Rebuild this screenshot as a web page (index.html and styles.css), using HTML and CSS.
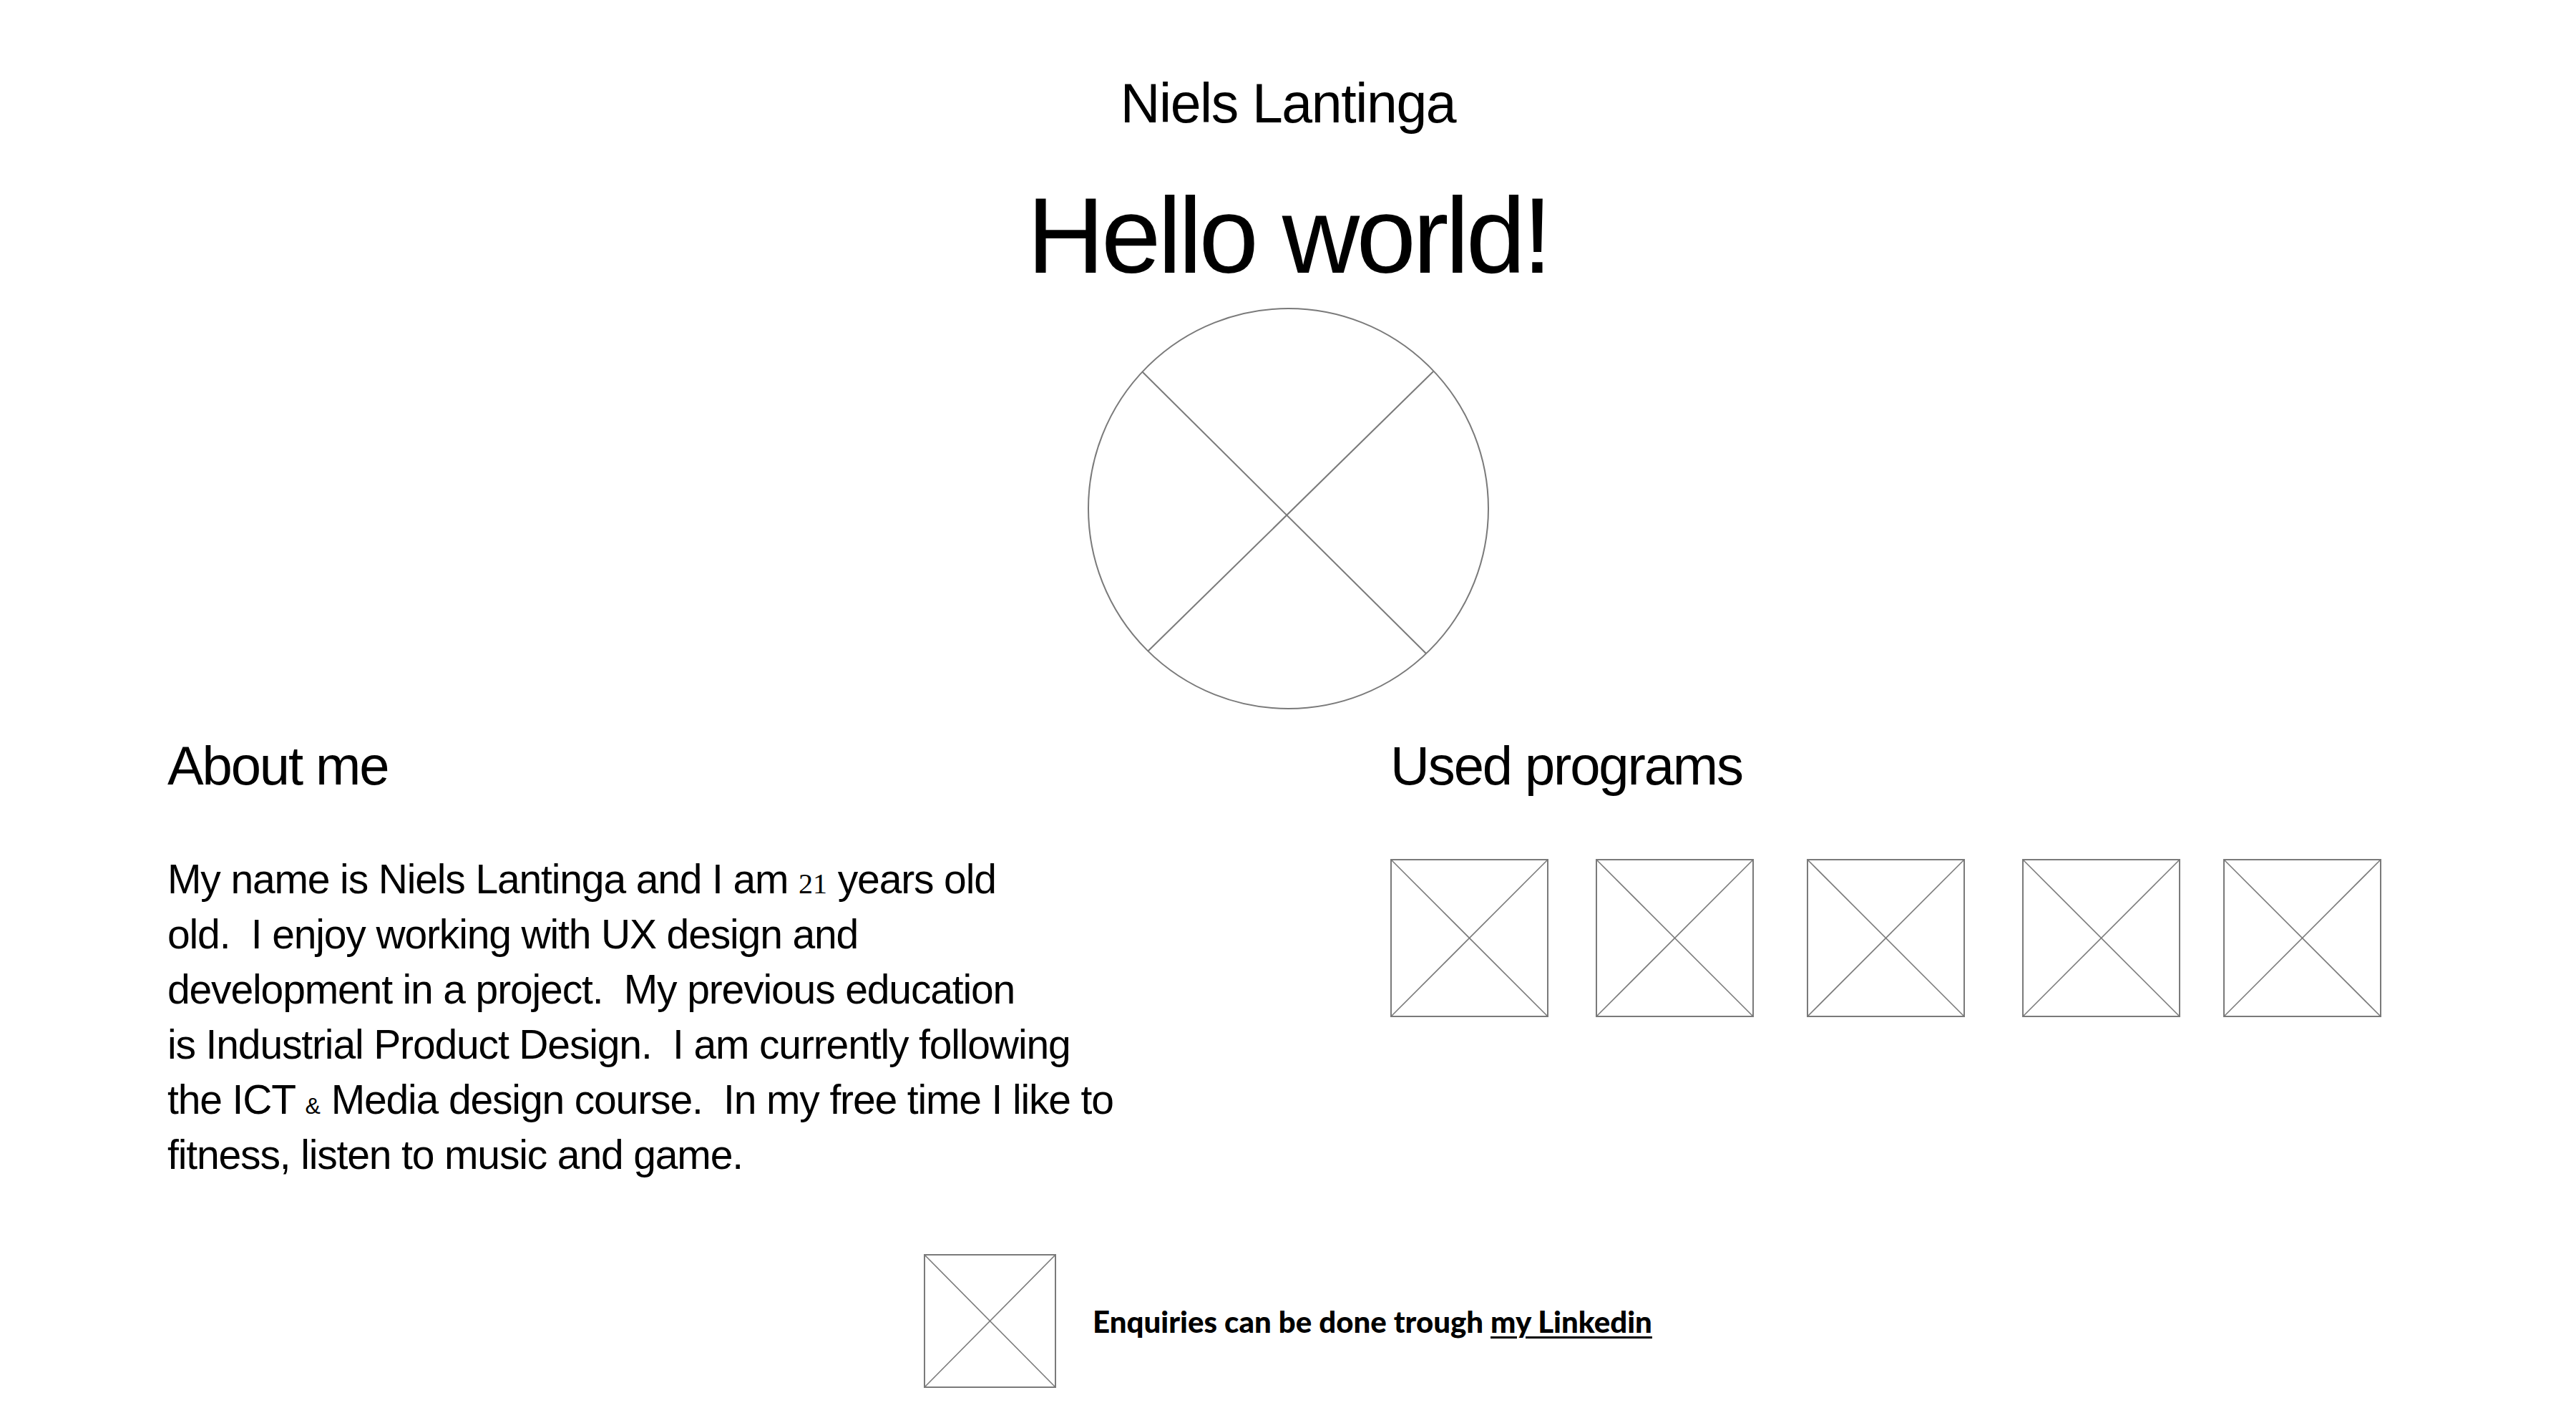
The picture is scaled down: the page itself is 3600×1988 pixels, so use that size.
FILE: index.html
```html
<!DOCTYPE html>
<html lang="en">
<head>
<meta charset="utf-8">
<title>Niels Lantinga</title>
<link rel="stylesheet" href="styles.css">
</head>
<body>
<header class="hero">
  <p class="name">Niels Lantinga</p>
  <h1 class="title">Hello world!</h1>
  <svg class="avatar" viewBox="0 0 561 561" width="561" height="561" aria-hidden="true">
    <circle cx="280.5" cy="280.5" r="279.5" fill="none" stroke="#7a7a7a" stroke-width="2"/>
    <line x1="76" y1="89" x2="473" y2="483" stroke="#7a7a7a" stroke-width="2"/>
    <line x1="483" y1="89" x2="84" y2="480" stroke="#7a7a7a" stroke-width="2"/>
  </svg>
</header>

<main class="content">
  <section class="about">
    <h2 class="heading">About me</h2>
    <p class="bio">My name is Niels Lantinga and I am <span class="num">21</span> years old<br>old.&nbsp; I enjoy working with UX design and<br>development in a project.&nbsp; My previous education<br>is Industrial Product Design.&nbsp; I am currently following<br>the ICT <span class="amp">&amp;</span> Media design course.&nbsp; In my free time I like to<br>fitness, listen to music and game.</p>
  </section>
  <section class="programs">
    <h2 class="heading">Used programs</h2>
    <div class="icons">
      <svg class="ph" viewBox="0 0 221 221" width="221" height="221"><rect x="1" y="1" width="219" height="219" fill="none" stroke="#7a7a7a" stroke-width="2"/><line x1="1" y1="1" x2="220" y2="220" stroke="#7a7a7a" stroke-width="1.6"/><line x1="220" y1="1" x2="1" y2="220" stroke="#7a7a7a" stroke-width="1.6"/></svg>
      <svg class="ph" viewBox="0 0 221 221" width="221" height="221"><rect x="1" y="1" width="219" height="219" fill="none" stroke="#7a7a7a" stroke-width="2"/><line x1="1" y1="1" x2="220" y2="220" stroke="#7a7a7a" stroke-width="1.6"/><line x1="220" y1="1" x2="1" y2="220" stroke="#7a7a7a" stroke-width="1.6"/></svg>
      <svg class="ph" viewBox="0 0 221 221" width="221" height="221"><rect x="1" y="1" width="219" height="219" fill="none" stroke="#7a7a7a" stroke-width="2"/><line x1="1" y1="1" x2="220" y2="220" stroke="#7a7a7a" stroke-width="1.6"/><line x1="220" y1="1" x2="1" y2="220" stroke="#7a7a7a" stroke-width="1.6"/></svg>
      <svg class="ph" viewBox="0 0 221 221" width="221" height="221"><rect x="1" y="1" width="219" height="219" fill="none" stroke="#7a7a7a" stroke-width="2"/><line x1="1" y1="1" x2="220" y2="220" stroke="#7a7a7a" stroke-width="1.6"/><line x1="220" y1="1" x2="1" y2="220" stroke="#7a7a7a" stroke-width="1.6"/></svg>
      <svg class="ph" viewBox="0 0 221 221" width="221" height="221"><rect x="1" y="1" width="219" height="219" fill="none" stroke="#7a7a7a" stroke-width="2"/><line x1="1" y1="1" x2="220" y2="220" stroke="#7a7a7a" stroke-width="1.6"/><line x1="220" y1="1" x2="1" y2="220" stroke="#7a7a7a" stroke-width="1.6"/></svg>
    </div>
  </section>
</main>

<footer class="footer">
  <svg class="footer-ph" viewBox="0 0 185 187" width="185" height="187" preserveAspectRatio="none"><rect x="1" y="1" width="183" height="185" fill="none" stroke="#7a7a7a" stroke-width="2"/><line x1="1" y1="1" x2="184" y2="186" stroke="#7a7a7a" stroke-width="1.6"/><line x1="184" y1="1" x2="1" y2="186" stroke="#7a7a7a" stroke-width="1.6"/></svg>
  <p class="contact">Enquiries can be done trough <a class="link" href="#">my Linkedin</a></p>
</footer>
</body>
</html>
```
FILE: styles.css
```css
html, body {
  margin: 0;
  padding: 0;
  background: #ffffff;
  color: #000000;
}

body {
  font-family: "Liberation Sans", Arial, sans-serif;
  width: 3600px;
}

.hero {
  display: flex;
  flex-direction: column;
  align-items: center;
  padding-top: 106px;
}

.name {
  margin: 0;
  font-size: 77px;
  line-height: 77px;
  font-weight: 400;
  letter-spacing: -0.018em;
}

.title {
  margin: 71px 0 0;
  font-size: 150px;
  line-height: 150px;
  font-weight: 400;
  letter-spacing: -0.03em;
}

.avatar {
  display: block;
  margin-top: 26px;
}

.content {
  display: grid;
  grid-template-columns: 1709px 1fr;
  padding-left: 234px;
  margin-top: 41px;
}

.heading {
  margin: 0;
  font-size: 76px;
  line-height: 76px;
  font-weight: 400;
  letter-spacing: -0.028em;
}

.bio {
  margin: 82px 0 0;
  font-size: 57px;
  line-height: 77px;
  letter-spacing: -0.02em;
}

.num {
  font-family: "Liberation Serif", "Times New Roman", serif;
  font-size: 40px;
  line-height: 1;
  letter-spacing: 0;
}

.amp {
  font-size: 32px;
  line-height: 1;
  letter-spacing: 0;
}

.icons {
  display: flex;
  margin-top: 92px;
}

.ph {
  display: block;
  flex: none;
}

.ph:nth-child(2) { margin-left: 66px; }
.ph:nth-child(3) { margin-left: 74px; }
.ph:nth-child(4) { margin-left: 80px; }
.ph:nth-child(5) { margin-left: 60px; }

.footer {
  display: flex;
  justify-content: center;
  align-items: center;
  gap: 51px;
  margin-top: 100px;
}

.footer-ph {
  display: block;
  flex: none;
}

.contact {
  margin: 0;
  font-family: Lato, "Open Sans", sans-serif;
  font-weight: 900;
  font-size: 42px;
  line-height: 50px;
  letter-spacing: 0;
}

.link {
  color: #000000;
  text-decoration: underline;
  text-decoration-thickness: 3px;
  text-underline-offset: 5px;
}
```
